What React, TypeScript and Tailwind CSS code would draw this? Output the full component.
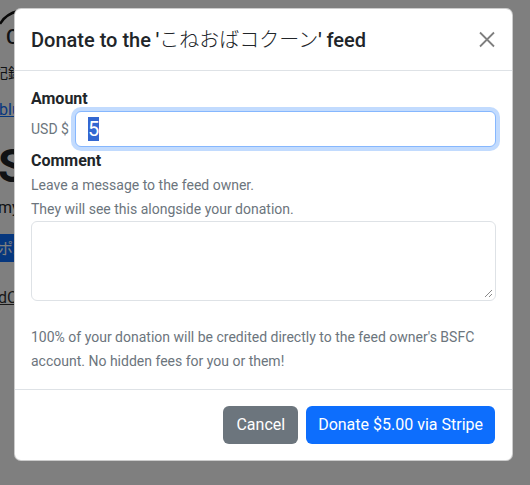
import React from "react";

export default function App() {
  return (
    <div className="relative w-[530px] h-[485px] overflow-hidden bg-white font-['Roboto','Noto_Sans_CJK_JP',sans-serif] text-[#212529]">
      {/* underlying page */}
      <div className="flex flex-col items-start">
        <div className="relative h-[52px] w-[60px]">
          <svg className="absolute left-0 top-0" width="60" height="52" viewBox="0 0 60 52" fill="none">
            <path d="M0 24 C 4 17, 10 13, 18 11 C 26 9, 36 9, 44 12" stroke="#111" strokeWidth="2.5" />
          </svg>
          <span className="absolute left-[6px] top-[26px] text-[20px] leading-[22px] font-medium">C</span>
        </div>
        <div className="mt-[12px] -ml-[6px] text-[14px] leading-[16px] font-['Noto_Sans_CJK_JP',sans-serif]">記録</div>
        <div className="mt-[20px] -ml-[1px] text-[16px] leading-[20px] text-[#0d6efd] underline">blue</div>
        <div className="mt-[24px] -ml-[2px] text-[46px] leading-[44px] font-bold">S</div>
        <div className="mt-[10px] -ml-[2px] text-[16px] leading-[20px]">my</div>
        <div className="mt-[16px] h-[28px] px-[2px] -ml-[4px] bg-[#0d6efd] text-white text-[15px] leading-[28px] font-['Noto_Sans_CJK_JP',sans-serif]">ポ二</div>
        <div className="mt-[26px] -ml-[2px] text-[16px] leading-[20px] underline text-[#333]">dC</div>
      </div>

      {/* backdrop */}
      <div className="absolute inset-0 bg-black/50" />

      {/* modal */}
      <div className="absolute inset-0 pt-[8px] pl-[14px]">
        <div className="w-[499px] bg-white rounded-[7px] border border-black/20 flex flex-col">
          <div className="flex items-center justify-between px-4 pt-[15px] pb-[15px] border-b border-[#dee2e6]">
            <h5 className="text-[20px] leading-[30px] font-medium text-[#212529]">
              Donate to the '<span className="font-['Noto_Sans_CJK_JP',sans-serif] font-light">こねおばコクーン</span>' feed
            </h5>
            <button className="w-[16px] h-[16px] mr-[1px] flex items-center justify-center">
              <svg width="17" height="17" viewBox="0 0 16 16">
                <path d="M1 1 L15 15 M15 1 L1 15" stroke="#7f7f7f" strokeWidth="1.8" />
              </svg>
            </button>
          </div>

          <div className="p-4 flex flex-col">
            <label className="text-[16px] leading-[24px] font-bold">Amount</label>
            <div className="flex items-center">
              <span className="text-[14px] text-[#6c757d] mr-[6px] leading-[20px]">USD $</span>
              <div className="flex-1 h-[36px] rounded-[6px] border border-[#86b7fe] shadow-[0_0_0_4px_rgba(13,110,253,0.25)] flex items-center pl-[12px] bg-white">
                <span className="bg-[#3367d1] text-white text-[20px] leading-[24px]">5</span>
              </div>
            </div>
            <label className="mt-[2px] text-[16px] leading-[24px] font-bold">Comment</label>
            <p className="text-[14px] leading-[24px] text-[#6c757d]">Leave a message to the feed owner.</p>
            <p className="text-[14px] leading-[24px] text-[#6c757d]">They will see this alongside your donation.</p>
            <div className="relative h-[80px] rounded-[6px] border border-[#dee2e6] bg-white">
              <svg className="absolute right-[2px] bottom-[2px]" width="9" height="9" viewBox="0 0 9 9">
                <path d="M8 1 L1 8 M8 5 L5 8" stroke="#8a8a8a" strokeWidth="1" />
              </svg>
            </div>
            <p className="mt-[24px] text-[14px] leading-[24px] text-[#6c757d]">
              100% of your donation will be credited directly to the feed owner's BSFC account. No hidden fees for you or them!
            </p>
          </div>

          <div className="border-t border-[#dee2e6] flex justify-end items-center gap-[8px] pt-[16px] pb-[16px] pr-[17px]">
            <button className="h-[38px] px-[13px] rounded-[6px] bg-[#6c757d] text-white text-[16px] leading-[24px]">Cancel</button>
            <button className="h-[38px] px-[12px] rounded-[6px] bg-[#0d6efd] text-white text-[16px] leading-[24px]">Donate $5.00 via Stripe</button>
          </div>
        </div>
      </div>
    </div>
  );
}
